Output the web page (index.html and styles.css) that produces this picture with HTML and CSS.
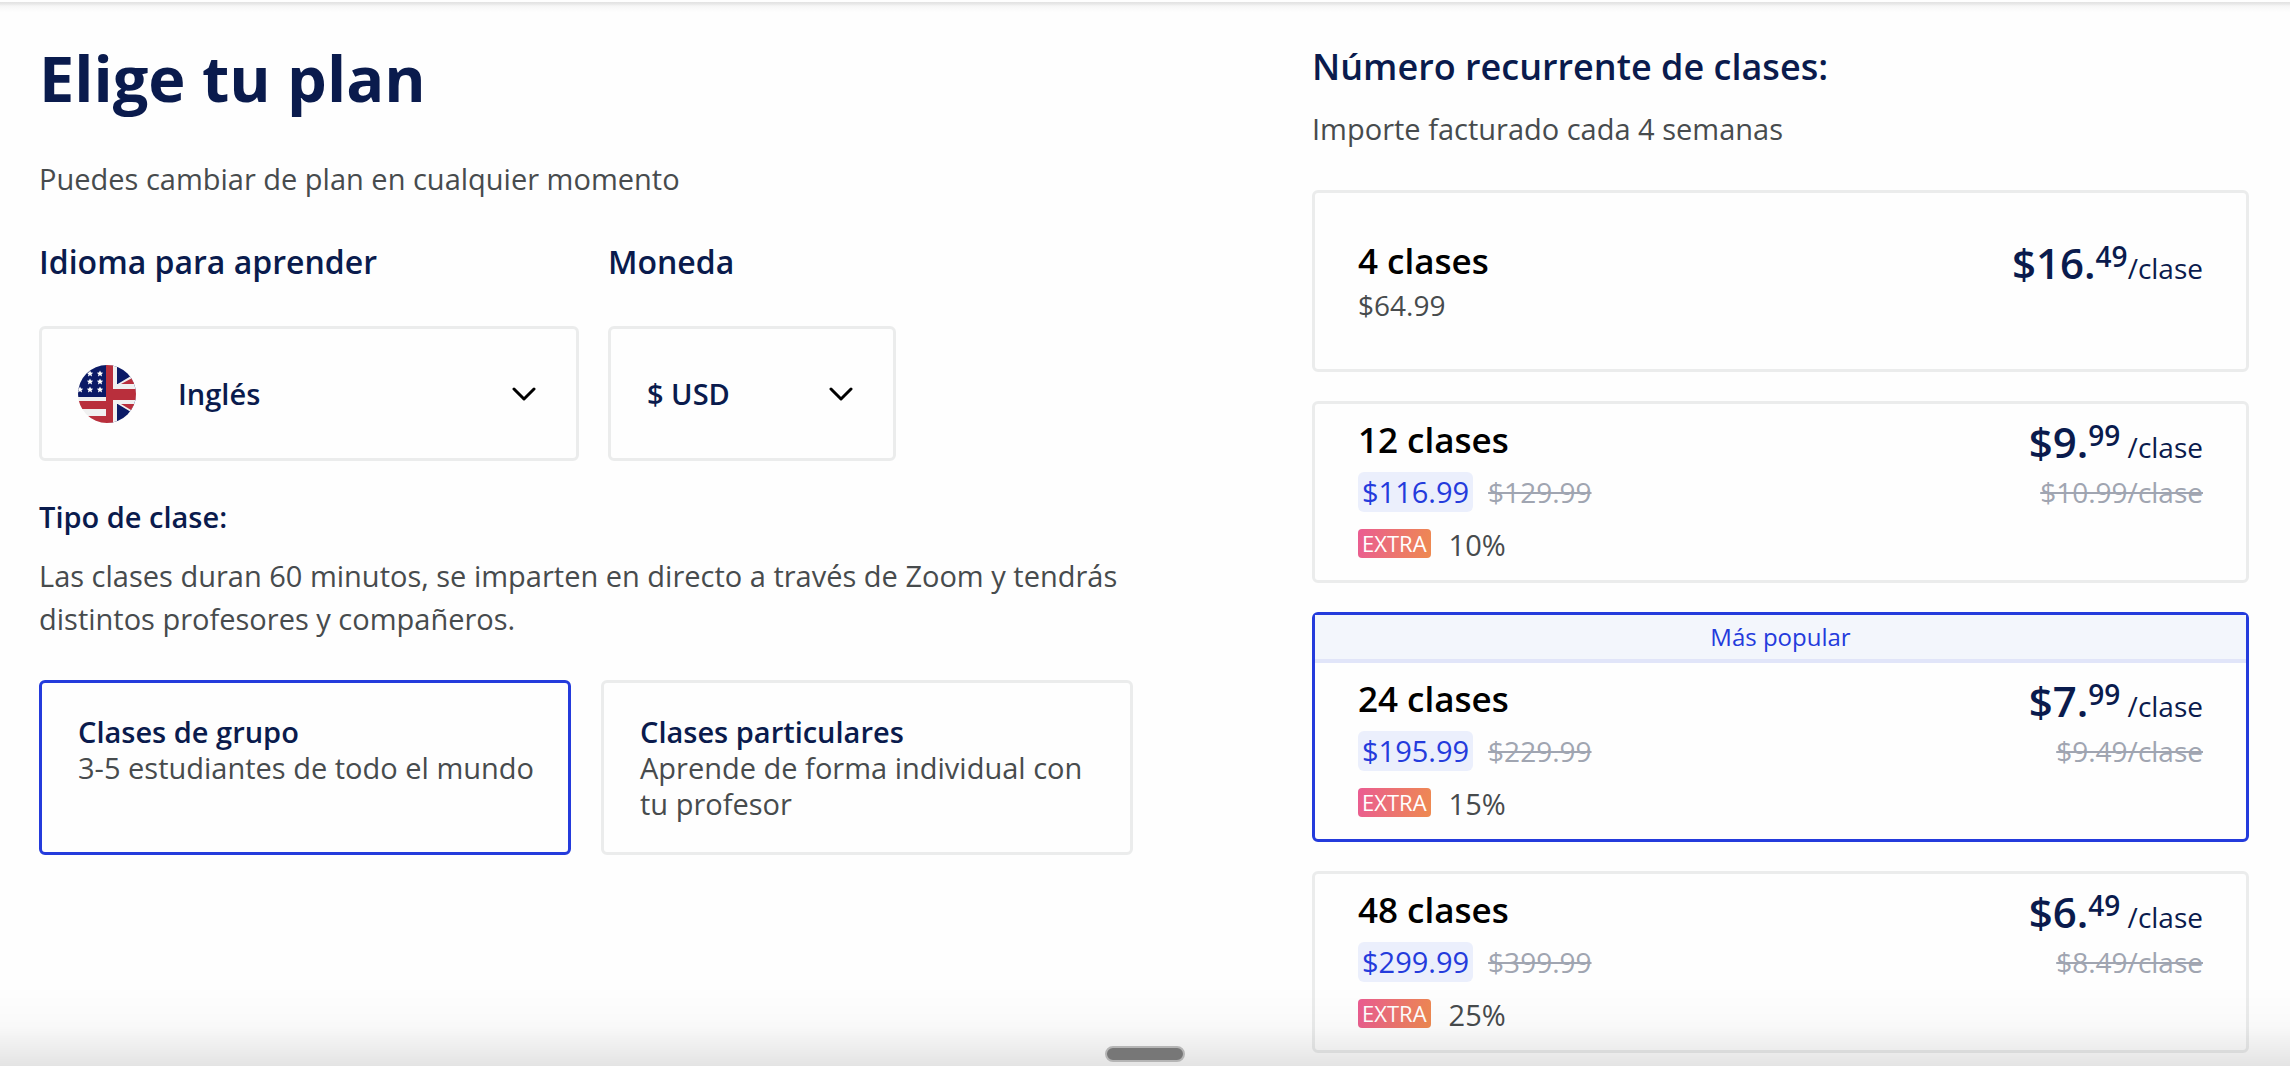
FILE: index.html
```html
<!DOCTYPE html>
<html lang="es">
<head>
    <meta charset="UTF-8">
    <meta name="viewport" content="width=device-width, initial-scale=1.0">
    <title>Elige tu plan</title>
    <link rel="stylesheet" href="styles.css">
</head>
<body>
    <div class="top-shadow"></div>

    <main class="page">
        <section class="settings">
            <h1>Elige tu plan</h1>
            <p class="subtitle">Puedes cambiar de plan en cualquier momento</p>

            <div class="selects">
                <div class="field">
                    <label for="language">Idioma para aprender</label>
                    <div class="select-box">
                        <svg class="flag" viewBox="0 0 58 58" aria-hidden="true">
                            <clipPath id="flag-clip"><circle cx="29" cy="29" r="29"/></clipPath>
                            <g clip-path="url(#flag-clip)">
                                <!-- US -->
                                <rect width="29" height="58" fill="#f0f0f0"/>
                                <rect width="29" height="32" fill="#0b1a66"/>
                                <rect y="36" width="29" height="8" fill="#b92f3c"/>
                                <rect y="51" width="29" height="7" fill="#b92f3c"/>
                                <g fill="#fff">
                                    <path id="star" d="M12 5.500l1 2 2.200.2-1.700 1.500.6 2.200L12 10.300l-2.100 1.100.6-2.200-1.700-1.500 2.200-.2z"/>
                                    <use href="#star" x="10"/>
                                    <use href="#star" y="8"/>
                                    <use href="#star" x="10" y="8"/>
                                    <use href="#star" x="-10" y="16"/>
                                    <use href="#star" y="16"/>
                                    <use href="#star" x="10" y="16"/>
                                </g>
                                <!-- UK -->
                                <rect x="29" width="29" height="58" fill="#0b1a66"/>
                                <path d="M38 20L58 8v12zM38 38l20 12V38z" fill="#f0f0f0"/>
                                <path d="M43 19l15-8v8zM43 39l15 9V39z" fill="#b92f3c"/>
                                <path d="M29 0h10v19h19v20H39v19H29z" fill="#f0f0f0"/>
                                <path d="M28 0h7v24h23v11H35v23h-7z" fill="#b92f3c"/>
                            </g>
                        </svg>
                        <select id="language">
                            <option>Inglés</option>
                        </select>
                        <svg class="chevron" viewBox="0 0 24 14" aria-hidden="true"><path d="M2 2l10 10L22 2"/></svg>
                    </div>
                </div>
                <div class="field">
                    <label for="currency">Moneda</label>
                    <div class="select-box">
                        <select id="currency">
                            <option>$ USD</option>
                        </select>
                        <svg class="chevron" viewBox="0 0 24 14" aria-hidden="true"><path d="M2 2l10 10L22 2"/></svg>
                    </div>
                </div>
            </div>

            <h2 class="type-title">Tipo de clase:</h2>
            <p class="type-text">Las clases duran 60 minutos, se imparten en directo a través de Zoom y tendrás distintos profesores y compañeros.</p>

            <div class="types">
                <label class="card type">
                    <input type="radio" name="type" value="group" checked>
                    <span class="type-name">Clases de grupo</span>
                    <span>3-5 estudiantes de todo el mundo</span>
                </label>
                <label class="card type">
                    <input type="radio" name="type" value="private">
                    <span class="type-name">Clases particulares</span>
                    <span>Aprende de forma individual con tu profesor</span>
                </label>
            </div>
        </section>

        <section class="plans">
            <h2>Número recurrente de clases:</h2>
            <p>Importe facturado cada 4 semanas</p>

            <label class="card plan">
                <input type="radio" name="plan" value="4">
                <span class="plan-body simple">
                    <span class="plan-info">
                        <span class="plan-name">4 clases</span>
                        <span class="total">$64.99</span>
                    </span>
                    <span class="plan-price">
                        <span class="price">$16.<sup>49</sup><small>/clase</small></span>
                    </span>
                </span>
            </label>

            <label class="card plan">
                <input type="radio" name="plan" value="12">
                <span class="plan-body">
                    <span class="plan-info">
                        <span class="plan-name">12 clases</span>
                        <span class="totals"><span class="now">$116.99</span><s>$129.99</s></span>
                        <span class="discount"><span class="extra">EXTRA</span>10%</span>
                    </span>
                    <span class="plan-price">
                        <span class="price">$9.<sup>99</sup><small> /clase</small></span>
                        <s>$10.99/clase</s>
                    </span>
                </span>
            </label>

            <label class="card plan">
                <input type="radio" name="plan" value="24" checked>
                <span class="popular">Más popular</span>
                <span class="plan-body">
                    <span class="plan-info">
                        <span class="plan-name">24 clases</span>
                        <span class="totals"><span class="now">$195.99</span><s>$229.99</s></span>
                        <span class="discount"><span class="extra">EXTRA</span>15%</span>
                    </span>
                    <span class="plan-price">
                        <span class="price">$7.<sup>99</sup><small> /clase</small></span>
                        <s>$9.49/clase</s>
                    </span>
                </span>
            </label>

            <label class="card plan">
                <input type="radio" name="plan" value="48">
                <span class="plan-body">
                    <span class="plan-info">
                        <span class="plan-name">48 clases</span>
                        <span class="totals"><span class="now">$299.99</span><s>$399.99</s></span>
                        <span class="discount"><span class="extra">EXTRA</span>25%</span>
                    </span>
                    <span class="plan-price">
                        <span class="price">$6.<sup>49</sup><small> /clase</small></span>
                        <s>$8.49/clase</s>
                    </span>
                </span>
            </label>
        </section>
    </main>

    <div class="bottom-fade"><span class="handle"></span></div>
</body>
</html>
```
FILE: styles.css
```css
:root {
    --navy: #0a1b4d;
    --blue: #243bdc;
    --text: #474b4d;
    --muted: #a0a5b1;
    --line: #ebecec;
}

* {
    box-sizing: border-box;
}

body {
    margin: 0;
    background: #fefefe;
    color: var(--text);
    font-family: "Open Sans", "Noto Sans", sans-serif;
    font-size: 29px;
    line-height: 40px;
}

h1, h2, p {
    margin: 0;
}

h1, h2 {
    color: var(--navy);
}

.top-shadow {
    position: absolute;
    top: 2px;
    left: 0;
    right: 0;
    height: 10px;
    background: linear-gradient(#e2e2e2, #e8e8e8 20%, #f6f6f6 40%, #fefefe);
}

.page {
    display: grid;
    grid-template-columns: 1094fr 937fr;
    gap: 179px;
    padding: 38px 41px 13px 39px;
}

/* Left column */
h1 {
    font-size: 63px;
    font-weight: 700;
    line-height: 80px;
}

.subtitle {
    margin-top: 41px;
}

.selects {
    display: flex;
    gap: 29px;
    margin-top: 41px;
}

.field {
    width: 288px;
}

.field:first-child {
    width: 540px;
}

.field label {
    display: block;
    margin-bottom: 42px;
    color: var(--navy);
    font-size: 32px;
    font-weight: 600;
    line-height: 44px;
}

.select-box {
    display: flex;
    align-items: center;
    height: 135px;
    padding: 0 40px 0 36px;
    border: 3px solid var(--line);
    border-radius: 6px;
}

.flag {
    flex: none;
    width: 58px;
    height: 58px;
    margin-right: 42px;
}

.select-box select {
    flex: 1;
    min-width: 0;
    padding: 0;
    border: 0;
    appearance: none;
    background: none;
    color: var(--navy);
    font: inherit;
    font-weight: 600;
}

.chevron {
    flex: none;
    width: 24px;
    height: 14px;
    fill: none;
    stroke: #000;
    stroke-width: 3;
    stroke-linecap: round;
    stroke-linejoin: round;
}

.type-title {
    margin-top: 36px;
    font-size: 29px;
    font-weight: 600;
}

.type-text {
    margin-top: 17px;
    line-height: 43px;
}

.types {
    display: grid;
    grid-template-columns: 1fr 1fr;
    gap: 30px;
    margin-top: 40px;
}

/* Selectable cards */
.card {
    display: block;
    border: 3px solid var(--line);
    border-radius: 6px;
    cursor: pointer;
}

.card:has(input:checked) {
    border-color: var(--blue);
}

.card input {
    position: absolute;
    opacity: 0;
    pointer-events: none;
}

.type {
    padding: 31px 28px 30px 36px;
    line-height: 36px;
}

.type span {
    display: block;
}

.type .type-name {
    color: var(--navy);
    font-weight: 600;
}

/* Right column */
.plans h2 {
    margin-top: 5px;
    font-size: 36px;
    font-weight: 600;
    line-height: 48px;
}

.plans p {
    margin: 18px 0 41px;
}

.plan + .plan {
    margin-top: 29px;
}

.popular {
    display: block;
    border-bottom: 4px solid #e1e5f9;
    background: #f3f6fc;
    color: var(--blue);
    font-size: 24px;
    line-height: 44px;
    text-align: center;
}

.plan-body {
    display: flex;
    justify-content: space-between;
    padding: 12px 43px 15px;
}

.plan-body.simple {
    padding: 44px 43px;
}

.plan-info,
.plan-price {
    display: flex;
    flex-direction: column;
}

.plan-name {
    color: #000;
    font-size: 35px;
    font-weight: 600;
    line-height: 48px;
}

.total,
.plan s {
    font-size: 28px;
}

.totals {
    display: flex;
    gap: 15px;
    margin-top: 8px;
}

.now {
    padding: 0 4px;
    border-radius: 6px;
    background: #ebeffc;
    color: var(--blue);
}

.plan s {
    color: var(--muted);
}

.discount {
    display: flex;
    align-items: center;
    gap: 18px;
    margin-top: 13px;
}

.extra {
    margin-bottom: 3px;
    padding: 0 4px;
    border-radius: 4px;
    background: linear-gradient(100deg, #ea5c92, #ee8a50);
    color: #fff;
    font-size: 22px;
    font-weight: 500;
    line-height: 29px;
}

.plan-price {
    align-items: flex-end;
}

.price {
    margin-bottom: 4px;
    color: var(--navy);
    font-size: 42px;
    font-weight: 600;
    line-height: 52px;
}

.price sup,
.price small {
    font-size: 28px;
    line-height: 0;
}

.price sup {
    vertical-align: 12px;
}

.price small {
    font-weight: 400;
}

/* Bottom overlay */
.bottom-fade {
    position: fixed;
    left: 0;
    right: 0;
    bottom: 0;
    display: flex;
    justify-content: center;
    align-items: flex-end;
    height: 80px;
    padding-bottom: 4px;
    background: linear-gradient(rgba(0, 0, 0, 0), rgba(0, 0, 0, .02) 50%, rgba(0, 0, 0, .1));
    pointer-events: none;
}

.handle {
    width: 80px;
    height: 16px;
    border: 2px solid #b5b5b5;
    border-radius: 8px;
    background: #777;
}
```
